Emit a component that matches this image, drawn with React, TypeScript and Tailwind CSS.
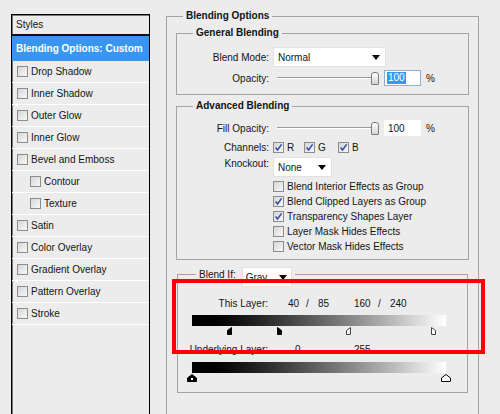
import React from 'react';

type Effect = { label: string; sub?: boolean };

const effects: Effect[] = [
  { label: 'Drop Shadow' },
  { label: 'Inner Shadow' },
  { label: 'Outer Glow' },
  { label: 'Inner Glow' },
  { label: 'Bevel and Emboss' },
  { label: 'Contour', sub: true },
  { label: 'Texture', sub: true },
  { label: 'Satin' },
  { label: 'Color Overlay' },
  { label: 'Gradient Overlay' },
  { label: 'Pattern Overlay' },
  { label: 'Stroke' },
];

const Box = ({ checked = false }: { checked?: boolean }) => (
  <span className="relative flex w-[11px] h-[11px] shrink-0 border border-[#8c8c8c] bg-linear-to-br from-[#d6d6d6] to-[#f8f8f8]">
    {checked && (
      <svg width="9" height="9" viewBox="0 0 9 9" className="absolute left-0 top-0">
        <path d="M1.6 4.4 L3.6 7 L7.6 1.4" fill="none" stroke="#2f4fa8" strokeWidth="1.6" />
      </svg>
    )}
  </span>
);

const Arrow = () => (
  <svg width="8" height="5" viewBox="0 0 8 5">
    <path d="M0 0 H8 L4 5 Z" fill="#000" />
  </svg>
);

const Slider = () => (
  <div className="flex items-center ml-[8px] w-[102px]">
    <div className="w-[94px] h-[2px] border-t border-[#9a9a9a] border-b border-b-white" />
    <div className="w-[8px] h-[13px] rounded-t-[3px] rounded-b-[1px] border border-[#7c7c7c] bg-linear-to-b from-white to-[#d4d4d4]" />
  </div>
);

// half / full thumbs under the gradient ramps
const Thumb = ({ kind, dark }: { kind: 'left' | 'right' | 'full'; dark: boolean }) => {
  const fill = dark ? '#000' : '#fff';
  if (kind === 'full') {
    return (
      <svg width="10" height="8" viewBox="0 0 10 8">
        <path d="M5 0.5 L9.5 4 L9.5 7.5 L0.5 7.5 L0.5 4 Z" fill={fill} stroke="#000" strokeWidth="1" />
        {dark && <rect x="4" y="4" width="2" height="2" fill="#fff" />}
      </svg>
    );
  }
  const d = kind === 'left' ? 'M4.5 0.5 L4.5 7.5 L0.5 7.5 L0.5 3.5 Z' : 'M0.5 0.5 L0.5 7.5 L4.5 7.5 L4.5 3.5 Z';
  return (
    <svg width="5" height="8" viewBox="0 0 5 8">
      <path d={d} fill={fill} stroke={dark ? '#000' : '#444'} strokeWidth="1" />
    </svg>
  );
};

const Ramp = ({ thumbs }: { thumbs: { v: number; kind: 'left' | 'right' | 'full'; dark: boolean }[] }) => (
  <>
    <div className="ml-[14px] w-[254px] h-[11px] bg-linear-to-r from-black to-white" />
    <div className="relative ml-[14px] mt-[1px] w-[254px] h-[8px]">
      {thumbs.map((t, i) => {
        const pos = Math.round((t.v / 255) * 254);
        const left = t.kind === 'left' ? pos - 5 : t.kind === 'right' ? pos : pos - 5;
        return (
          <span key={i} className="absolute top-0 flex" style={{ left }}>
            <Thumb kind={t.kind} dark={t.dark} />
          </span>
        );
      })}
    </div>
  </>
);

export default function App() {
  return (
    <div className="relative w-[500px] h-[414px] overflow-hidden bg-[#ececec] text-[10px] text-[#141414] font-['Liberation_Sans',Arial,sans-serif]">
      <div className="flex items-start">
        {/* Styles list */}
        <div className="mt-[14px] ml-[11px] w-[139px] h-[420px] border border-black shadow-[inset_1px_1px_0_#7a7a7a]">
          <div className="h-[21px] flex items-center pl-[4px] border-b-2 border-[#111]">Styles</div>
          <div className="h-[25px] flex items-center pl-[4px] bg-[#3896f0] text-white font-bold">
            Blending Options: Custom
          </div>
          {effects.map((e) => (
            <div
              key={e.label}
              className={`h-[22px] flex items-center gap-[3px] border-b border-white ${e.sub ? 'pl-[18px]' : 'pl-[5px]'}`}
            >
              <Box />
              <span>{e.label}</span>
            </div>
          ))}
        </div>

        {/* Blending options */}
        <fieldset className="ml-[16px] mt-[10px] w-[313px] h-[430px] border border-[#a3a3a3] px-[9px] pt-[5px]">
          <legend className="ml-[7px] px-[3px] font-bold leading-[12px]">Blending Options</legend>

          <fieldset className="border border-[#a3a3a3] pt-[8px] pb-[8px]">
            <legend className="ml-[16px] px-[3px] font-bold leading-[12px]">General Blending</legend>
            <div className="flex items-center h-[20px]">
              <span className="w-[92px] text-right">Blend Mode:</span>
              <div className="ml-[4px] w-[113px] h-[20px] flex items-center justify-between pl-[4px] pr-[5px] bg-white border border-[#e2e2e2]">
                <span>Normal</span>
                <Arrow />
              </div>
            </div>
            <div className="flex items-center h-[16px] mt-[3px]">
              <span className="w-[92px] text-right">Opacity:</span>
              <Slider />
              <div className="ml-[5px] w-[37px] h-[16px] flex items-center pl-[2px] bg-white border border-[#8fb0d8]">
                <span className="bg-[#3399ff] text-white px-[1px] leading-[12px]">100</span>
              </div>
              <span className="ml-[5px]">%</span>
            </div>
          </fieldset>

          <fieldset className="mt-[5px] border border-[#a3a3a3] pt-[8px] pb-[5px]">
            <legend className="ml-[16px] px-[3px] font-bold leading-[12px]">Advanced Blending</legend>
            <div className="flex items-center h-[16px]">
              <span className="w-[92px] text-right">Fill Opacity:</span>
              <Slider />
              <div className="ml-[5px] w-[37px] h-[16px] flex items-center pl-[4px] bg-white">100</div>
              <span className="ml-[5px]">%</span>
            </div>
            <div className="flex items-center h-[16px] mt-[3px]">
              <span className="w-[92px] text-right">Channels:</span>
              <span className="ml-[4px] flex items-center w-[31px]">
                <Box checked />
                <span className="ml-[3px]">R</span>
              </span>
              <span className="flex items-center w-[34px]">
                <Box checked />
                <span className="ml-[3px]">G</span>
              </span>
              <span className="flex items-center">
                <Box checked />
                <span className="ml-[3px]">B</span>
              </span>
            </div>
            <div className="flex items-start h-[20px] mt-[2px]">
              <span className="w-[92px] text-right leading-[14px]">Knockout:</span>
              <div className="ml-[4px] w-[59px] h-[20px] flex items-center justify-between pl-[4px] pr-[5px] bg-white border border-[#e2e2e2]">
                <span>None</span>
                <Arrow />
              </div>
            </div>
            <div className="mt-[2px]">
              {[
                ['Blend Interior Effects as Group', false],
                ['Blend Clipped Layers as Group', true],
                ['Transparency Shapes Layer', true],
                ['Layer Mask Hides Effects', false],
                ['Vector Mask Hides Effects', false],
              ].map(([label, on]) => (
                <div key={label as string} className="flex items-center h-[15px] pl-[96px] gap-[3px]">
                  <Box checked={on as boolean} />
                  <span>{label as string}</span>
                </div>
              ))}
            </div>
          </fieldset>

          <fieldset className="mt-[7px] mx-[1px] border border-[#a3a3a3] pt-[14px] pb-[10px]">
            <legend className="ml-[18px] px-[3px] h-[15px] flex items-start">
              <span className="leading-[15px]">Blend If:</span>
              <div className="ml-[6px] w-[50px] h-[20px] flex items-center justify-between pl-[3px] pr-[4px] bg-white border border-[#e2e2e2]">
                <span>Gray</span>
                <Arrow />
              </div>
            </legend>
            <div className="flex items-center h-[14px]">
              <span className="w-[90px] text-right">This Layer:</span>
              <span className="ml-[20px] w-[18px]">40</span>
              <span className="w-[12px]">/</span>
              <span className="w-[36px]">85</span>
              <span className="w-[24px]">160</span>
              <span className="w-[12px]">/</span>
              <span>240</span>
            </div>
            <div className="mt-[5px]">
              <Ramp
                thumbs={[
                  { v: 40, kind: 'left', dark: true },
                  { v: 85, kind: 'right', dark: true },
                  { v: 160, kind: 'left', dark: false },
                  { v: 240, kind: 'right', dark: false },
                ]}
              />
            </div>
            <div className="flex items-center h-[14px] mt-[7px]">
              <span className="w-[90px] text-right">Underlying Layer:</span>
              <span className="ml-[27px] w-[59px]">0</span>
              <span>255</span>
            </div>
            <div className="mt-[6px]">
              <Ramp
                thumbs={[
                  { v: 0, kind: 'full', dark: true },
                  { v: 255, kind: 'full', dark: false },
                ]}
              />
            </div>
          </fieldset>
        </fieldset>
      </div>

      {/* red highlight drawn over the Blend If area */}
      <div className="absolute left-[172px] top-[279px] w-[313px] h-[75px] border-4 border-[#ff0000]" />
    </div>
  );
}
